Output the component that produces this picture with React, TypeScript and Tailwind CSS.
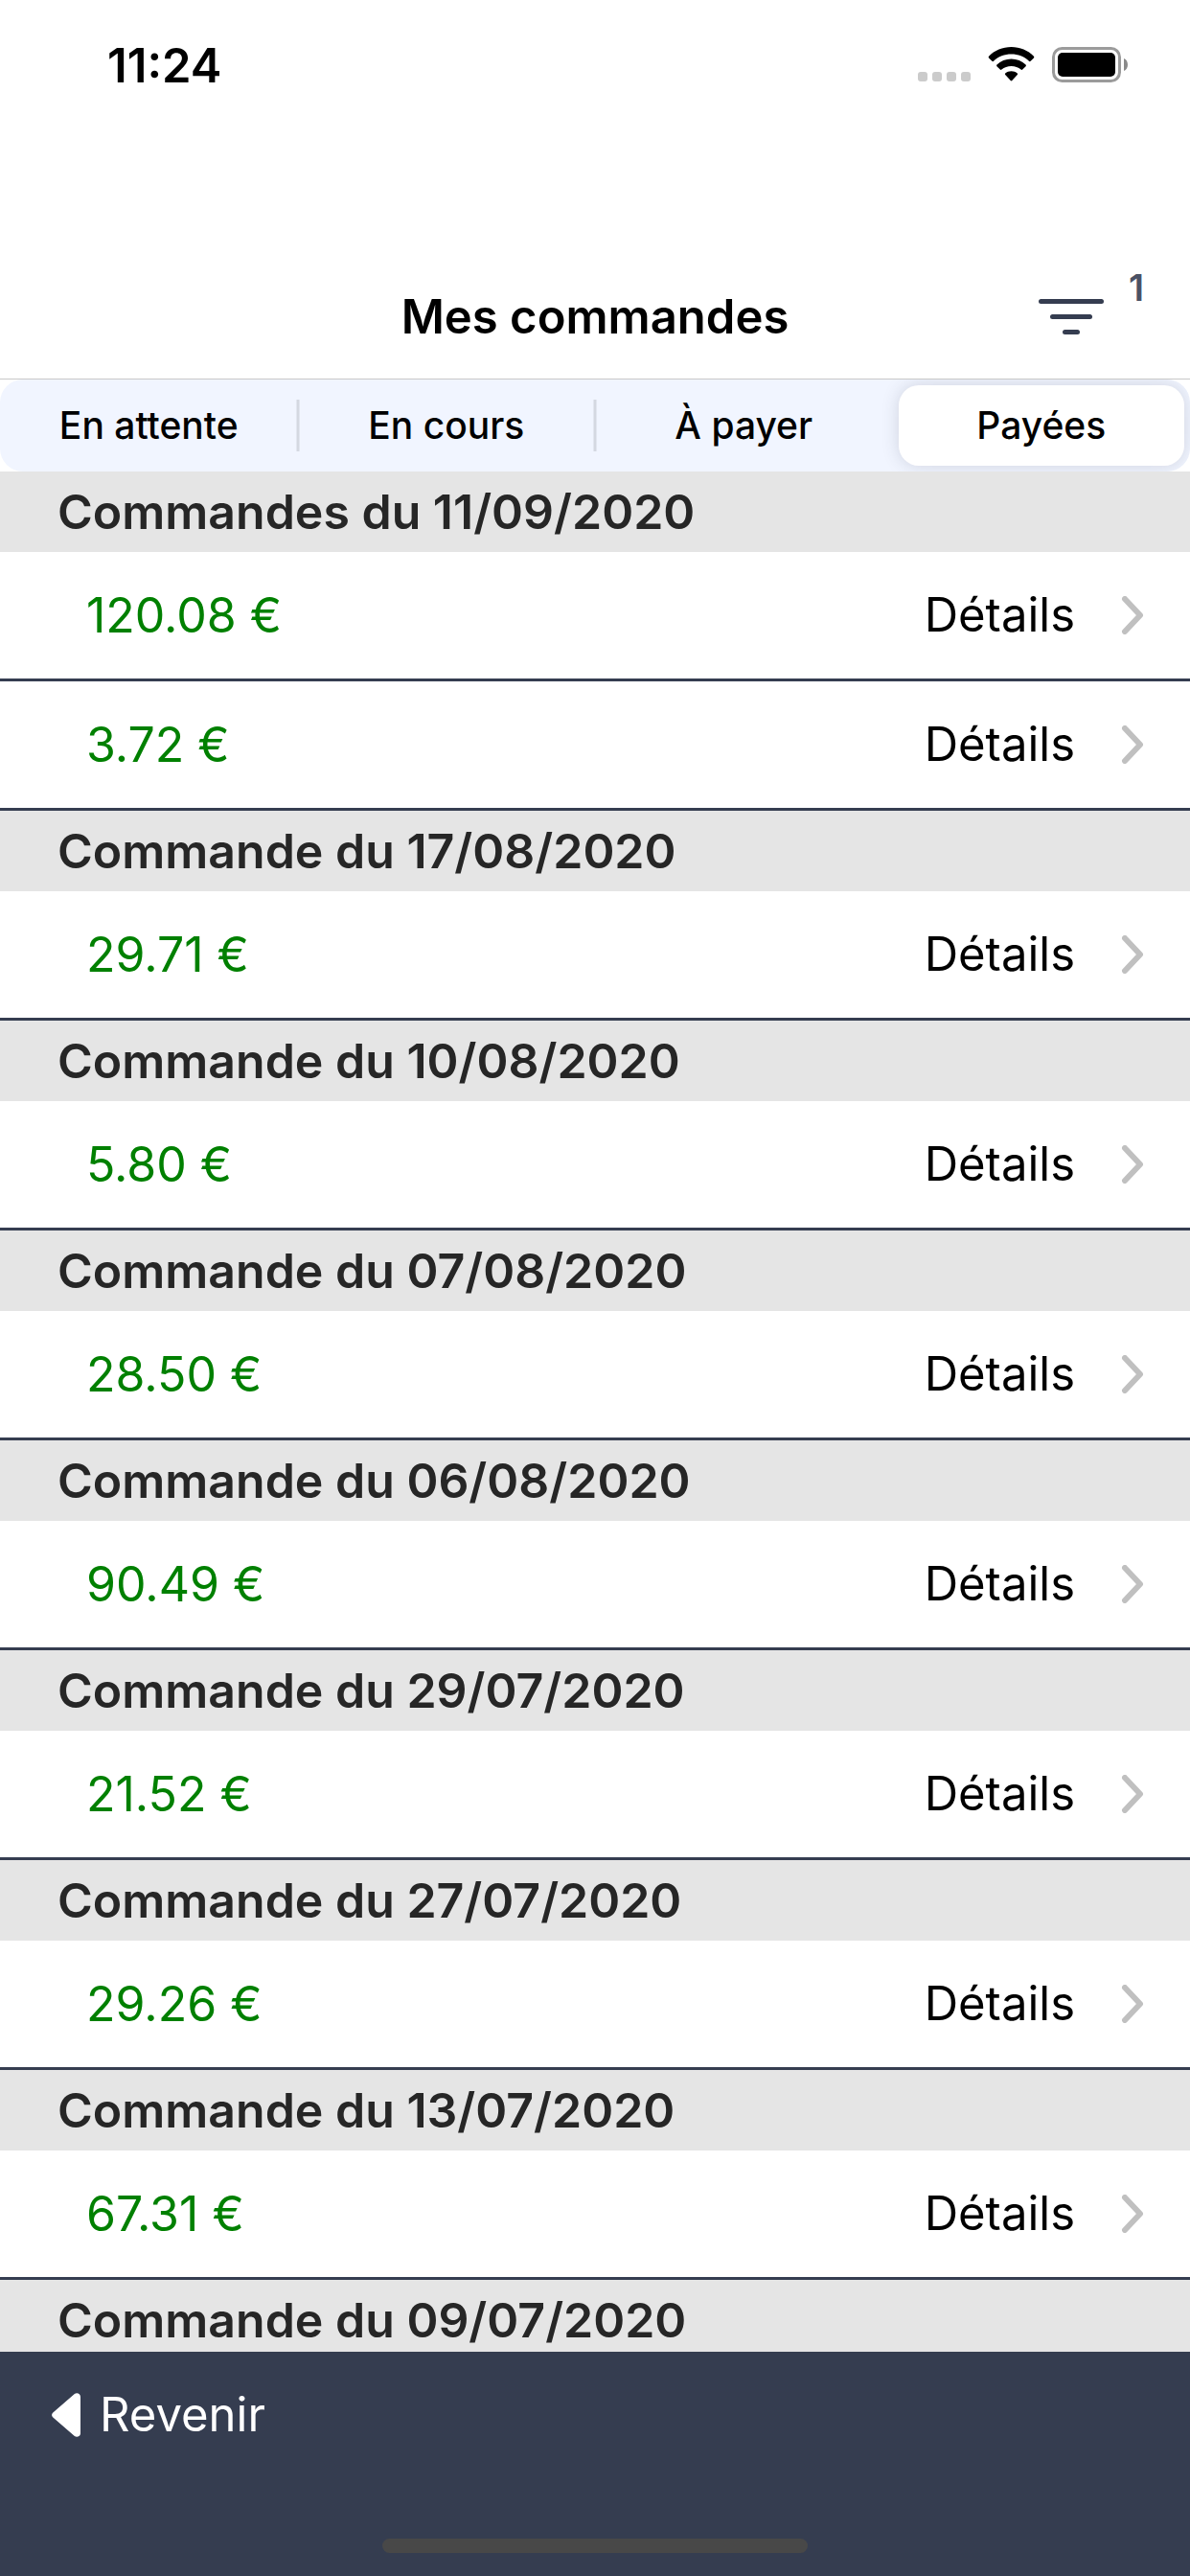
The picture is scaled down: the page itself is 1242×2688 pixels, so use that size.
import React, { useState } from 'react';

const tabs = ['En attente', 'En cours', 'À payer', 'Payées'];

const orders = [
  { title: 'Commandes du 11/09/2020', amounts: ['120.08 €', '3.72 €'] },
  { title: 'Commande du 17/08/2020', amounts: ['29.71 €'] },
  { title: 'Commande du 10/08/2020', amounts: ['5.80 €'] },
  { title: 'Commande du 07/08/2020', amounts: ['28.50 €'] },
  { title: 'Commande du 06/08/2020', amounts: ['90.49 €'] },
  { title: 'Commande du 29/07/2020', amounts: ['21.52 €'] },
  { title: 'Commande du 27/07/2020', amounts: ['29.26 €'] },
  { title: 'Commande du 13/07/2020', amounts: ['67.31 €'] },
  { title: 'Commande du 09/07/2020', amounts: [] },
];

const StatusBar = () => (
  <div className="flex h-[136px] shrink-0 items-center justify-between pl-28 pr-16">
    <span className="text-[49px] font-semibold leading-none">11:24</span>
    <svg width="220" height="38" viewBox="0 0 220 38" aria-hidden="true">
      <g fill="#cbcbcb">
        <rect x="0" y="26" width="10" height="10" rx="3" />
        <rect x="15" y="26" width="10" height="10" rx="3" />
        <rect x="30" y="26" width="10" height="10" rx="3" />
        <rect x="45" y="26" width="10" height="10" rx="3" />
      </g>
      <g fill="#000">
        <path d="M97.500 0C106.500 0 115 3.500 121 9.800Q121.700 10.700 121 11.400L117.600 14.800Q116.700 15.500 116 14.800C111 10 104.500 7.600 97.500 7.600S84 10 79 14.800Q78.300 15.500 77.400 14.800L74 11.400Q73.300 10.700 74 9.800C80 3.500 88.500 0 97.500 0Z" />
        <path d="M97.500 12.600C103.300 12.600 108.600 14.800 112.600 18.600Q113.300 19.400 112.600 20.200L109.200 23.600Q108.400 24.300 107.600 23.600C104.800 21.200 101.400 19.900 97.500 19.900S90.200 21.200 87.400 23.600Q86.600 24.300 85.800 23.600L82.400 20.200Q81.700 19.400 82.400 18.600C86.400 14.800 91.700 12.600 97.500 12.600Z" />
        <path d="M97.500 25.200C99.900 25.200 102.100 26 103.800 27.500Q104.500 28.200 103.800 29L98.300 35.100Q97.500 35.900 96.700 35.100L91.200 29Q90.500 28.200 91.200 27.500C92.900 26 95.100 25.200 97.500 25.200Z" />
      </g>
      <rect x="141.500" y="1.500" width="69" height="34" rx="9" fill="none" stroke="#9b9b9b" strokeWidth="3" />
      <rect x="146" y="6" width="60" height="25" rx="5" fill="#000" />
      <path d="M215 12C220.300 14 220.300 23 215 25Z" fill="#8a8a8a" />
    </svg>
  </div>
);

const FilterIcon = () => (
  <svg width="68" height="38" viewBox="0 0 68 38" fill="#353d50" aria-hidden="true">
    <rect x="0" y="0" width="68" height="5" rx="2.500" />
    <rect x="12" y="16" width="44" height="5" rx="2.500" />
    <rect x="25" y="32" width="18" height="5" rx="2.500" />
  </svg>
);

const Chevron = () => (
  <svg width="24" height="40" viewBox="0 0 24 40" fill="none" stroke="#c0c0c0" strokeWidth="6" strokeLinecap="round" strokeLinejoin="round" aria-hidden="true">
    <path d="M4 3L20 20L4 37" />
  </svg>
);

const App = () => {
  const [active, setActive] = useState(3);

  return (
    <div className="flex h-screen flex-col overflow-hidden bg-white font-['Inter',sans-serif] text-black">
      <StatusBar />

      {/* Header */}
      <header className="grid h-[260px] shrink-0 grid-cols-[1fr_auto_1fr] items-end border-b border-[#c8c8c8] pb-[34px]">
        <h1 className="col-start-2 text-[49px] font-semibold leading-[60px]">Mes commandes</h1>
        <button aria-label="Filtrer, 1 filtre actif" className="flex h-[81px] items-start justify-self-end gap-[26px] pr-12">
          <span className="pt-8"><FilterIcon /></span>
          <span className="text-[38px] font-semibold leading-10 text-[#4a5165]">1</span>
        </button>
      </header>

      {/* Tabs */}
      <div role="tablist" className="grid h-24 shrink-0 grid-cols-4 overflow-hidden rounded-3xl bg-[#f1f5ff]">
        {tabs.map((tab, index) => (
          <div key={tab} className="relative flex p-1.5">
            <button
              role="tab"
              aria-selected={active === index}
              onClick={() => setActive(index)}
              className={`flex-1 rounded-[21px] text-[39px] font-medium ${active === index ? 'bg-white shadow-[0_0_18px_rgba(53,61,80,0.18)]' : ''}`}
            >
              {tab}
            </button>
            {index < 2 && <span className="absolute right-0 top-[21px] h-[54px] w-[3px] translate-x-1/2 bg-[#d4d8e1]" />}
          </div>
        ))}
      </div>

      {/* Orders */}
      <main className="min-h-0 flex-1 overflow-y-auto [scrollbar-width:none]">
        {orders.map((order) => (
          <section key={order.title}>
            <h2 className="bg-[#e5e5e5] px-[60px] text-[50px] font-semibold leading-[84px] text-[#262626]">{order.title}</h2>
            {order.amounts.map((amount) => (
              <a key={amount} href="#details" className="flex h-[135px] items-center border-b-3 border-[#353d50] pl-[90px] pr-12">
                <span className="flex-1 text-[50px] text-[#008000]">{amount}</span>
                <span className="pr-12 text-[49px]">Détails</span>
                <Chevron />
              </a>
            ))}
          </section>
        ))}
      </main>

      {/* Footer */}
      <footer className="flex h-[234px] shrink-0 flex-col items-center justify-between bg-[#353d50] pb-6 pt-9 text-white">
        <button className="flex items-center gap-5 self-start pl-[54px] text-[49px] leading-[60px]">
          <svg width="30" height="46" viewBox="0 0 30 46" fill="#fff" aria-hidden="true">
            <path d="M1.300 20.500L23.500 1.300C26 -1 30 0.500 30 4V42C30 45.500 26 47 23.500 44.700L1.300 25.500Q-1.200 23 1.300 20.500Z" />
          </svg>
          Revenir
        </button>
        <span className="h-[15px] w-[444px] rounded-full bg-[#484848]" />
      </footer>
    </div>
  );
};

export default App;
